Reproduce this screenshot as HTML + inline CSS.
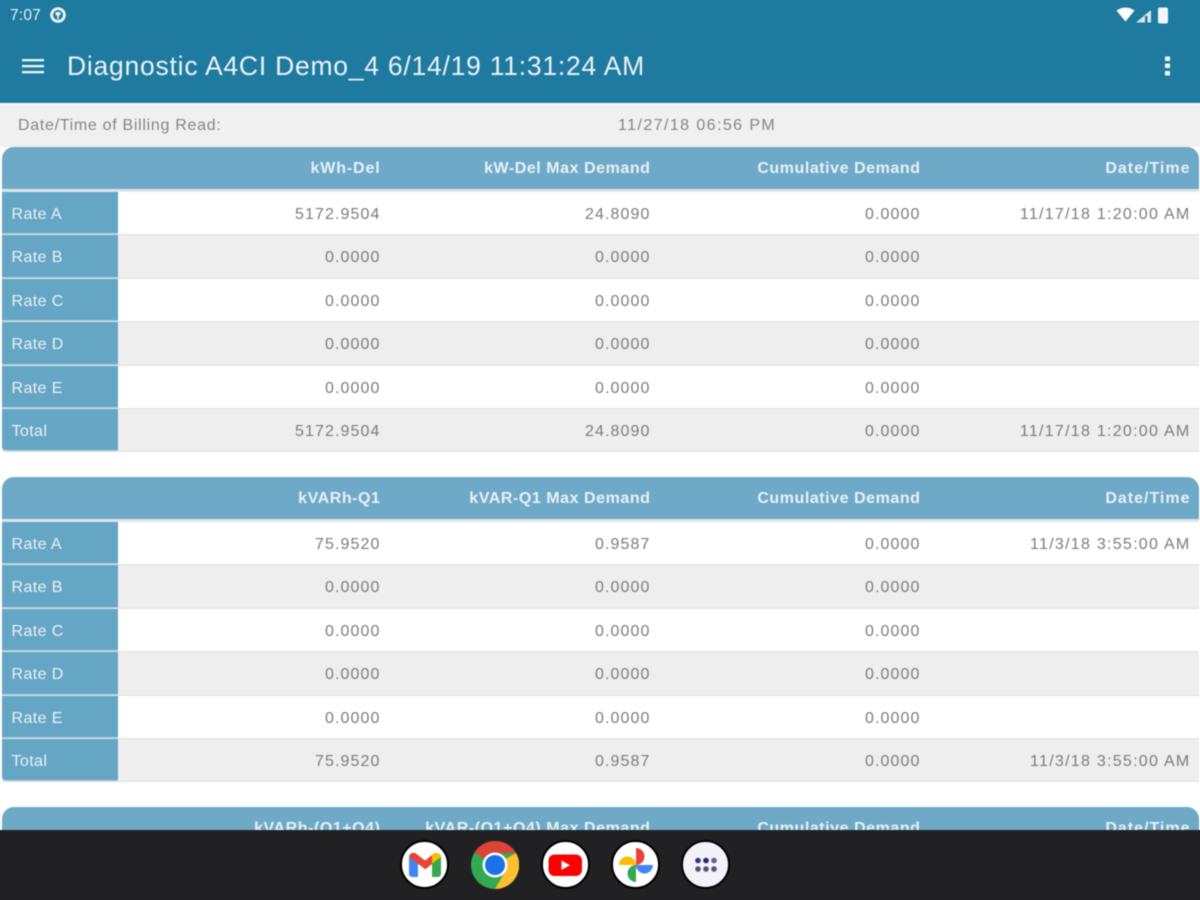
<!DOCTYPE html>
<html><head><meta charset="utf-8">
<style>
html,body{margin:0;padding:0;width:1200px;height:900px;overflow:hidden;background:#fff;font-family:"Liberation Sans",sans-serif}
*{box-sizing:border-box}
#clip{position:absolute;left:0;top:0;width:1200px;height:900px;overflow:hidden;contain:paint}
#wrap{position:absolute;left:0;top:0;width:1200px;height:900px;filter:blur(.5px)}
.a{position:absolute;white-space:nowrap}
.bar{left:-10px;top:-10px;width:1220px;height:113px;background:#1f7a9f}
.title{left:67px;top:49px;font-size:26.5px;letter-spacing:.76px;line-height:34px;color:#e9f3f7}
.tbl{position:absolute;left:2px;width:1197px;height:306px}
.head{position:absolute;left:0;top:0;width:1197px;height:42px;background:#6eaac8;border-radius:12px 12px 0 0}
.shade{position:absolute;left:0;top:42px;width:1197px;height:3px;background:#dfe3e5}
.row{position:absolute;left:0;width:1197px;height:43.4px;border-bottom:1px solid #e0e0e0}
.row.g{background:#eeeeee}
.lab{position:absolute;left:0;top:0;width:116px;height:100%;background:#66a6c5;color:#e8f2f6;font-size:16px;letter-spacing:.4px;line-height:46px;padding-left:9.500px;border-bottom:1px solid #a9cadb}
.c{position:absolute;top:0;font-size:16px;letter-spacing:1.1px;line-height:46px;color:#7c7c7c;text-align:right;white-space:nowrap;width:260px}
.h{position:absolute;top:0;font-size:16px;letter-spacing:.55px;font-weight:bold;line-height:44px;color:#e6f1f6;text-align:right;white-space:nowrap;width:260px}
.c1{left:118.500px}.c2{left:388.500px}.c3{left:658.500px}.c4{left:928.500px}
.c.c4{letter-spacing:1.270px}
.h.c4{letter-spacing:1px}
.h.w{letter-spacing:.85px}
.dock{left:-10px;top:830px;width:1220px;height:80px;background:#212124}
.ic{position:absolute;top:840px;width:49px;height:49px;border-radius:50%;background:#fff;border:2px solid #000}
.inf{font-size:16px;line-height:18px;color:#858585}
</style></head><body><div id="clip"><div id="wrap">

<div class="a bar"></div>
<div class="a" style="left:10px;top:7px;font-size:15.500px;letter-spacing:.2px;line-height:18px;color:#e6f0f4">7:07</div>
<svg class="a" style="left:49px;top:6px" width="18" height="18" viewBox="0 0 18 18"><circle cx="9" cy="9" r="6.400" fill="none" stroke="#eef5f8" stroke-width="2.800"/><rect x="6.500" y="6" width="5" height="3.400" rx="1" fill="#eef5f8"/><rect x="8.200" y="9" width="1.600" height="4" fill="#eef5f8"/></svg>
<svg class="a" style="left:1115px;top:6px" width="56" height="18" viewBox="0 0 56 18"><path d="M1.500 4.500Q10.500 -1.500 19.500 4.500L10.500 15.500Z" fill="#fff"/><path d="M21 16.500L36 4V16.500Z" fill="#d7e6ed"/><path d="M30 10h2.500v6.500h-2.500z" fill="#1f7a9f"/><rect x="43" y="1.500" width="10" height="16" rx="2" fill="#f2f7f9"/></svg>
<svg class="a" style="left:22px;top:58px" width="23" height="18" viewBox="0 0 23 18"><rect x="0" y="1" width="22" height="2.300" fill="#edf5f8"/><rect x="0" y="7" width="22" height="2.300" fill="#edf5f8"/><rect x="0" y="13" width="22" height="2.300" fill="#edf5f8"/></svg>
<div class="a title">Diagnostic A4CI Demo_4 6/14/19 11:31:24 AM</div>
<svg class="a" style="left:1163px;top:55px" width="10" height="22" viewBox="0 0 10 22"><rect x="2" y="1.500" width="5" height="4.500" fill="#f2f7f9"/><rect x="2" y="8.500" width="5" height="4.500" fill="#f2f7f9"/><rect x="2" y="16" width="5" height="4.500" fill="#f2f7f9"/></svg>

<div class="a" style="left:-10px;top:104px;width:1220px;height:43px;background:#f0f0f0"></div>
<div class="a inf" style="left:18px;top:116.500px;letter-spacing:.7px">Date/Time of Billing Read:</div>
<div class="a inf" style="left:618px;top:116.500px;letter-spacing:1.420px">11/27/18 06:56 PM</div>

<div class="tbl" style="top:147px">
<div class="head">
<div class="h c1 w">kWh-Del</div><div class="h c2">kW-Del Max Demand</div><div class="h c3">Cumulative Demand</div><div class="h c4">Date/Time</div>
</div><div class="shade"></div>
<div class="row" style="top:45px"><div class="lab">Rate A</div><div class="c c1">5172.9504</div><div class="c c2">24.8090</div><div class="c c3">0.0000</div><div class="c c4">11/17/18 1:20:00 AM</div></div>
<div class="row g" style="top:88.400px"><div class="lab">Rate B</div><div class="c c1">0.0000</div><div class="c c2">0.0000</div><div class="c c3">0.0000</div></div>
<div class="row" style="top:131.800px"><div class="lab">Rate C</div><div class="c c1">0.0000</div><div class="c c2">0.0000</div><div class="c c3">0.0000</div></div>
<div class="row g" style="top:175.200px"><div class="lab">Rate D</div><div class="c c1">0.0000</div><div class="c c2">0.0000</div><div class="c c3">0.0000</div></div>
<div class="row" style="top:218.600px"><div class="lab">Rate E</div><div class="c c1">0.0000</div><div class="c c2">0.0000</div><div class="c c3">0.0000</div></div>
<div class="row g" style="top:262px"><div class="lab" style="border-radius:0 0 0 4px">Total</div><div class="c c1">5172.9504</div><div class="c c2">24.8090</div><div class="c c3">0.0000</div><div class="c c4">11/17/18 1:20:00 AM</div></div>
</div>

<div class="tbl" style="top:477px">
<div class="head">
<div class="h c1">kVARh-Q1</div><div class="h c2">kVAR-Q1 Max Demand</div><div class="h c3">Cumulative Demand</div><div class="h c4">Date/Time</div>
</div><div class="shade"></div>
<div class="row" style="top:45px"><div class="lab">Rate A</div><div class="c c1">75.9520</div><div class="c c2">0.9587</div><div class="c c3">0.0000</div><div class="c c4">11/3/18 3:55:00 AM</div></div>
<div class="row g" style="top:88.400px"><div class="lab">Rate B</div><div class="c c1">0.0000</div><div class="c c2">0.0000</div><div class="c c3">0.0000</div></div>
<div class="row" style="top:131.800px"><div class="lab">Rate C</div><div class="c c1">0.0000</div><div class="c c2">0.0000</div><div class="c c3">0.0000</div></div>
<div class="row g" style="top:175.200px"><div class="lab">Rate D</div><div class="c c1">0.0000</div><div class="c c2">0.0000</div><div class="c c3">0.0000</div></div>
<div class="row" style="top:218.600px"><div class="lab">Rate E</div><div class="c c1">0.0000</div><div class="c c2">0.0000</div><div class="c c3">0.0000</div></div>
<div class="row g" style="top:262px"><div class="lab" style="border-radius:0 0 0 4px">Total</div><div class="c c1">75.9520</div><div class="c c2">0.9587</div><div class="c c3">0.0000</div><div class="c c4">11/3/18 3:55:00 AM</div></div>
</div>

<div class="tbl" style="top:807px;height:23px;overflow:hidden">
<div class="head">
<div class="h c1">kVARh-(Q1+Q4)</div><div class="h c2">kVAR-(Q1+Q4) Max Demand</div><div class="h c3">Cumulative Demand</div><div class="h c4">Date/Time</div>
</div>
</div>

<div class="a dock"></div>

<div class="ic" style="left:400px"></div>
<svg class="a" style="left:400px;top:840px" width="49" height="49" viewBox="0 0 49 49">
<path d="M9 17V34a3 3 0 0 0 3 3h6V22z" fill="#4285f4"/><path d="M32 22V37h6a3 3 0 0 0 3-3V17z" fill="#34a853"/>
<path d="M9 17a4.500 4.500 0 0 1 7-3.500l9 7 0 8.500-16-12z" fill="#ea4335"/><path d="M25 20.500l9-7 0 9-9 7z" fill="#ea4335"/><path d="M32 15.500l2-2a4.500 4.500 0 0 1 7 3.500l-9 6.500z" fill="#fbbc04"/></svg>

<svg class="a" style="left:471px;top:841px" width="48" height="48" viewBox="0 0 48 48">
<circle cx="24" cy="24" r="24" fill="#34a853"/>
<path d="M24 0A24 24 0 0 1 45 12H24A12 12 0 0 0 13.600 18L3.500 11.500A24 24 0 0 1 24 0Z" fill="#db4437"/>
<path d="M45 12A24 24 0 0 1 24 48L34.400 30A12 12 0 0 0 34.400 18Z" fill="#fbc02d"/>
<circle cx="24" cy="24" r="12.500" fill="#fff"/><circle cx="24" cy="24" r="10" fill="#1a73e8"/></svg>

<div class="ic" style="left:541px"></div>
<svg class="a" style="left:541px;top:840px" width="49" height="49" viewBox="0 0 49 49">
<rect x="7.500" y="14.500" width="33.500" height="21.500" rx="6" fill="#f00"/><path d="M20.500 20.500l8.500 4.700-8.500 4.700z" fill="#fff"/></svg>

<div class="ic" style="left:611px"></div>
<svg class="a" style="left:611px;top:840px" width="49" height="49" viewBox="0 0 49 49">
<path d="M25 25V8a8.500 8.500 0 0 1 0 17z" fill="#ea4335"/>
<path d="M25 25H42a8.500 8.500 0 0 1-17 0z" fill="#4285f4"/>
<path d="M25 25V42a8.500 8.500 0 0 1 0-17z" fill="#34a853"/>
<path d="M25 25H8a8.500 8.500 0 0 1 17 0z" fill="#fbbc04"/></svg>

<div class="ic" style="left:681px;background:#f3f2f8"></div>
<svg class="a" style="left:681px;top:840px" width="49" height="49" viewBox="0 0 49 49">
<circle cx="17" cy="20.500" r="2.800" fill="#2a3a84"/><circle cx="25" cy="20.500" r="2.800" fill="#1c2a78"/><circle cx="33" cy="20.500" r="2.800" fill="#6b5f8c"/>
<circle cx="17" cy="29" r="2.800" fill="#55556f"/><circle cx="25" cy="29" r="2.800" fill="#55556f"/><circle cx="33" cy="29" r="2.800" fill="#55556f"/></svg>

</div></div></body></html>
